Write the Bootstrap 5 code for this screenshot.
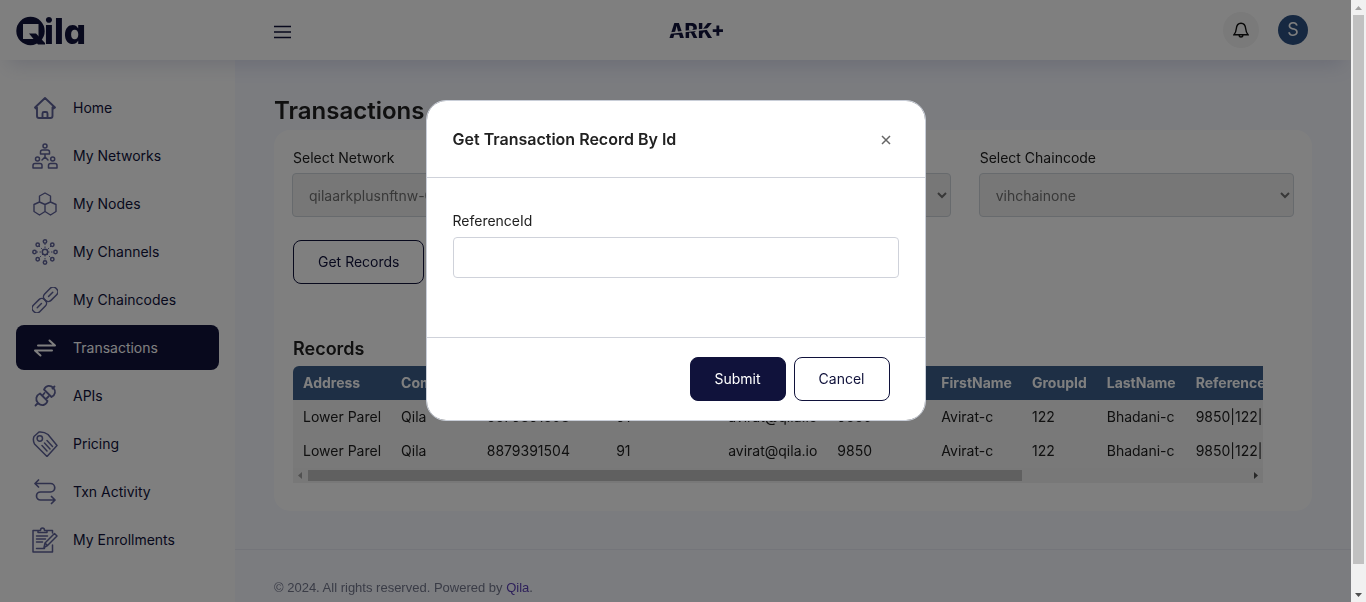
<!DOCTYPE html>
<html lang="en">
<head>
<meta charset="utf-8">
<meta name="viewport" content="width=device-width, initial-scale=1">
<title>Qila - Transactions</title>
<link href="https://cdn.jsdelivr.net/npm/bootstrap@5.3.0/dist/css/bootstrap.min.css" rel="stylesheet">
<style>
  :root { --navy: #10123b; --steel: #3c5f8a; --icon: #5f6299; --bar: 15px; }
  html { scrollbar-width: none; }
  body { font-family: Inter, "Liberation Sans", sans-serif; font-size: 14px; line-height: 20px; color: #212121; background: #f6f8ff; padding-right: var(--bar); }
  .topbar { height: 60px; right: var(--bar); background: #fff; box-shadow: 0 12px 20px -8px rgba(80, 90, 150, .2); }
  .brand-zone { width: 235px; padding-left: 16px; }
  .top-main { padding: 0 43px 0 39px; }
  .partner { margin-left: 36%; }
  .bell { width: 36px; height: 36px; background: #f4f4f4; }
  .avatar { width: 30px; height: 30px; background: #2c5082; color: #fff; font-size: 18px; }
  .sidebar { width: 235px; top: 60px; bottom: 0; background: #fff; padding: 25px 16px; gap: 3px; }
  .side-item { height: 45px; padding: 0 16px; gap: 15px; border-radius: 8px; color: var(--navy); text-decoration: none; }
  .side-item svg { width: 26px; height: 26px; fill: none; stroke: var(--icon); stroke-width: 1.5; stroke-linecap: round; stroke-linejoin: round; }
  .side-item.active { background: var(--navy); color: #fff; }
  .side-item.active svg { stroke: #fff; }
  .content-zone { margin-left: 235px; padding-top: 95px; }
  .page-body { padding: 0 39px; }
  .page-title { font-size: 24px; line-height: 32px; font-weight: 600; margin: 0 0 3px; color: #212121; }
  .panel { background: #fff; border-radius: 16px; padding: 18px 19px 28px; }
  .filters { display: grid; grid-template-columns: repeat(3, 1fr); gap: 28px; margin: 0 -1px 23px; }
  .filters label { display: block; margin-bottom: 5px; padding-left: 1px; }
  .filters select { width: 100%; height: 44px; padding: 0 12px; background: #efefef; border: 1px solid #ced4da; border-radius: 4px; color: #707070; opacity: 1; }
  .btn-q { height: 44px; padding: 0 24px; border-radius: 8px; font-size: 14px; line-height: 20px; --bs-btn-color: #10123b; --bs-btn-border-color: #10123b; --bs-btn-hover-bg: #10123b; --bs-btn-hover-color: #fff; }
  .btn-q-fill { --bs-btn-color: #fff; --bs-btn-bg: #10123b; }
  .records-title { font-size: 18px; line-height: 24px; font-weight: 600; margin: 53px 0 5px; }
  .records-wrap { margin-right: 30px; }
  .records-box { overflow-x: auto; scrollbar-width: none; background: #f2f2f2; border-radius: 6px 0 0 0; }
  .records { min-width: 100%; white-space: nowrap; }
  .records th, .records td { height: 34px; padding: 7px 10px; }
  .records th { background: var(--steel); color: #fff; font-weight: 700; }
  .records .col-employee { min-width: 104px; }
  .scroll-track { background: #f1f1f1; }
  .scroll-thumb { background: #c1c1c1; }
  .scroll-x { height: 15px; }
  .scroll-x .scroll-thumb { width: 76%; height: 11px; }
  .scroll-y { width: var(--bar); z-index: 1100; }
  .scroll-y .scroll-thumb { height: 96%; width: 11px; }
  .scroll-y svg, .scroll-x svg { display: block; flex: none; }
  .site-foot { margin-top: 38px; border-top: 1px solid #e9ebf4; padding: 28px 39px; font: 13px/20px "Liberation Sans", Arial, sans-serif; color: #74788d; }
  .site-foot a { color: #5b3fb5; text-decoration: none; }
  .modal-backdrop { width: 100%; height: 100%; }
  .modal { padding-right: var(--bar); scrollbar-width: none; }
  .modal-dialog { margin: 100px auto; }
  .modal-content { border: 1px solid #c9ced8; border-radius: 20px; overflow: hidden; }
  .modal-header { height: 77px; padding: 0 26px; border-color: #cfd2da; }
  .modal-title { font-size: 16px; line-height: 24px; font-weight: 600; }
  .close-x { border: 0; background: none; padding: 2px 5px 0; }
  .modal-body { padding: 33px 26px 59px; }
  .modal-body label { margin-bottom: 6px; }
  .modal-body input { height: 41px; border-color: #cfd2da; border-radius: 4px; }
  .modal-footer { padding: 19px 35px; gap: 8px; border-color: #cfd2da; }
  .modal-footer > * { margin: 0; }
</style>
</head>
<body>
<header class="topbar d-flex align-items-center fixed-top">
  <div class="brand-zone">
    <a href="#" aria-label="Qila home" class="d-block">
      <svg width="100" height="48" viewBox="0 0 100 48" class="d-block">
        <circle cx="14.500" cy="25" r="14.200" fill="#10123b"/>
        <path d="M7 18h15.500v15H7z" fill="#fff"/>
        <path d="M13 27.500h7l9 9.500v1.500h-7z" fill="#10123b"/>
        <text x="28" y="38" font-family="Inter, sans-serif" font-size="35" font-weight="800" fill="#10123b" style="font-feature-settings:'cv11'">ila</text>
      </svg>
    </a>
  </div>
  <div class="top-main flex-grow-1 d-flex align-items-center">
    <button type="button" class="border-0 bg-transparent p-0" aria-label="Toggle menu">
      <svg width="18" height="16" viewBox="0 0 18 16" class="d-block mt-1"><path d="M0 2.500h17M0 8h17M0 13.500h17" stroke="#10123b" stroke-width="1.700"/></svg>
    </button>
    <svg width="74" height="26" viewBox="0 0 74 26" class="partner me-auto">
      <text x="5" y="21" font-family="Inter, sans-serif" font-size="20" font-weight="800" fill="#10123b">ARK+</text>
      <path d="M2 16.500L44 12" stroke="#fff" stroke-width="1.500"/>
    </svg>
    <div class="d-flex align-items-center" style="gap:19px">
      <button type="button" class="bell rounded-circle border-0 p-0 d-flex align-items-center justify-content-center" aria-label="Notifications">
        <svg width="16" height="16" viewBox="0 0 16 16" fill="none" stroke="#111" stroke-width="1.400"><path d="M1 12.800h14c-1.500-1.600-2-3-2.300-6C12.400 3.300 10.500 1.200 8 1.200S3.600 3.300 3.300 6.800C3 9.800 2.500 11.200 1 12.800zM6 13.500c.5 2 3.500 2 4 0"/></svg>
      </button>
      <a href="#" class="avatar rounded-circle d-flex align-items-center justify-content-center text-decoration-none">S</a>
    </div>
  </div>
</header>

<nav class="sidebar position-fixed d-flex flex-column" aria-label="Main">
  <a href="#" class="side-item d-flex align-items-center"><svg viewBox="0 0 26 26" style="stroke-width:1.900"><path d="M3 12.500L13 3l10 9.500-1.500 1-1-1V21q0 2-2 2H7q-2 0-2-2v-8.500l-1 1zM10.500 23v-4.500q0-1.500 1.500-1.500h2q1.500 0 1.500 1.500V23"/></svg>Home</a>
  <a href="#" class="side-item d-flex align-items-center"><svg viewBox="0 0 26 26"><circle cx="13" cy="3" r="2"/><path d="M8.500 11V9q0-2 2-2h5q2 0 2 2v2zM13 11v3M13 14l-3 3M13 14l3 3M1 25v-2.500q0-2 2-2h5q2 0 2 2V25zM16.500 25v-2.500q0-2 2-2h4.500q2 0 2 2V25z"/><circle cx="5.500" cy="16" r="2"/><circle cx="20.700" cy="16" r="2"/></svg>My Networks</a>
  <a href="#" class="side-item d-flex align-items-center"><svg viewBox="0 0 26 26" style="stroke-width:1.400"><path d="M13 2l5.500 3v6L13 13.500l-5.500-2.500V5zM7.500 11l5.500 2.500v7l-5.500 3.500L2 20.500v-7zM18.500 11l5.500 2.500v7l-5.500 3.500-5.500-3.500v-7z"/></svg>My Nodes</a>
  <a href="#" class="side-item d-flex align-items-center"><svg viewBox="0 0 26 26"><circle cx="13" cy="13" r="2.700"/><circle cx="13" cy="2.500" r="1.700"/><circle cx="13" cy="23.500" r="1.700"/><circle cx="2.500" cy="13" r="1.700"/><circle cx="23.500" cy="13" r="1.700"/><circle cx="5.700" cy="5.700" r="1.700"/><circle cx="20.300" cy="5.700" r="1.700"/><circle cx="5.700" cy="20.300" r="1.700"/><circle cx="20.300" cy="20.300" r="1.700"/><path stroke-width="1" stroke-dasharray="1.500 1.500" stroke-linecap="butt" d="M13 4.500v5.500M13 16v5.500M4.500 13H10M16 13h5.500M7 7l4 4M15 15l4 4M19 7l-4 4M11 15l-4 4"/></svg>My Channels</a>
  <a href="#" class="side-item d-flex align-items-center"><svg viewBox="0 0 26 26"><g transform="rotate(-45 13 13)"><rect x="-3" y="8.500" width="16" height="9" rx="4"/><rect x="13" y="8.500" width="16" height="9" rx="4"/><path d="M2 13h6M18 13h6"/></g></svg>My Chaincodes</a>
  <a href="#" class="side-item active d-flex align-items-center" aria-current="page"><svg viewBox="0 0 26 26" style="stroke-width:2"><path d="M6 10.500h17l-5.500-5M20 15.500H3l5.500 5"/></svg>Transactions</a>
  <a href="#" class="side-item d-flex align-items-center"><svg viewBox="0 0 26 26" style="stroke-width:1.800"><path d="M3.500 22.500L6 20M20.500 5.500L22.500 3.500M8 10.500l7.500 7.500c-1.500 4.500-6 5.500-9.500 2-3-3.500-2-7.500 2-9.500zM12 6.500l7.500 7.500c4-2 4.500-6 2-9-3-3-7.500-3-9.500 1.500zM10.500 12.500l2-2.500M14 16l2.500-2.500"/></svg>APIs</a>
  <a href="#" class="side-item d-flex align-items-center"><svg viewBox="0 0 26 26"><path d="M2 5.500L7 1q5-.5 9 2.500l9 11L15 25.500 2.500 13Q.5 9 2 5.500zM10 14.500l5 5.500M12.500 12l5.500 6M15 9.500l5.500 6"/><circle cx="7.800" cy="7.500" r="2.700"/></svg>Pricing</a>
  <a href="#" class="side-item d-flex align-items-center"><svg viewBox="0 0 26 26" style="stroke-width:1.700"><path d="M6.500 1L3 4.500 6.500 8M3 4.500h15.500a4.200 4.200 0 0 1 0 8.500H8.500a4 4 0 0 0 0 8H23M19.500 17.500L23 21l-3.500 3.500"/></svg>Txn Activity</a>
  <a href="#" class="side-item d-flex align-items-center"><svg viewBox="0 0 26 26"><path d="M7 3.500H1V25h19.500v-7M14 3.500h6.500V6M6 5.500v-2h2.500q0-2.500 2-2.500t2 2.500H15v2zM4.500 9h11M4.500 12h9M4.500 15h6M4.500 21.500h8M12 20.500l1-4.500L22.500 6.500l2.500 2.500-9.500 9.500zM13 16l2.500 2.500"/></svg>My Enrollments</a>
</nav>

<div class="content-zone">
  <main class="page-body">
    <h1 class="page-title">Transactions</h1>
    <section class="panel">
      <div class="filters">
        <div><label for="network">Select Network</label><select id="network" disabled><option>qilaarkplusnftnw-01</option></select></div>
        <div><label for="channel">Select Channel</label><select id="channel" disabled><option>qilachannel</option></select></div>
        <div><label for="chaincode">Select Chaincode</label><select id="chaincode" disabled><option>vihchainone</option></select></div>
      </div>
      <button type="button" class="btn btn-q">Get Records</button>
      <h2 class="records-title">Records</h2>
      <div class="records-wrap">
        <div class="records-box">
          <table class="records">
            <thead><tr><th>Address</th><th>Company</th><th>ContactNumber</th><th>CountryCode</th><th>Email</th><th class="col-employee">EmployeeId</th><th>FirstName</th><th>GroupId</th><th>LastName</th><th>ReferenceId</th><th>TransactionType</th></tr></thead>
            <tbody>
              <tr><td>Lower Parel</td><td>Qila</td><td>8879391503</td><td>91</td><td>avirat@qila.io</td><td>9850</td><td>Avirat-c</td><td>122</td><td>Bhadani-c</td><td>9850|122|8879391503|Avirat-c</td><td>Create record</td></tr>
              <tr><td>Lower Parel</td><td>Qila</td><td>8879391504</td><td>91</td><td>avirat@qila.io</td><td>9850</td><td>Avirat-c</td><td>122</td><td>Bhadani-c</td><td>9850|122|8879391504|Avirat-c</td><td>Create record</td></tr>
            </tbody>
          </table>
        </div>
        <div class="scroll-track scroll-x d-flex align-items-center" aria-hidden="true">
          <svg width="15" height="15"><path d="M9 4v7L5 7.500z" fill="#a3a3a3"/></svg>
          <div class="flex-grow-1"><div class="scroll-thumb"></div></div>
          <svg width="15" height="15"><path d="M6 4v7l4-3.500z" fill="#505050"/></svg>
        </div>
      </div>
    </section>
  </main>
  <footer class="site-foot">© 2024. All rights reserved. Powered by <a href="#">Qila</a>.</footer>
</div>

<div class="modal-backdrop show"></div>
<div class="modal show d-block" role="dialog" aria-modal="true" aria-labelledby="recordTitle">
  <div class="modal-dialog">
    <form class="modal-content">
      <div class="modal-header">
        <h2 class="modal-title" id="recordTitle">Get Transaction Record By Id</h2>
        <button type="button" class="close-x" aria-label="Close"><svg width="16" height="16" viewBox="0 0 16 16" class="d-block"><path d="M4 4l8 8M12 4l-8 8" stroke="#666" stroke-width="1.500"/></svg></button>
      </div>
      <div class="modal-body">
        <label for="reference">ReferenceId</label>
        <input type="text" class="form-control" id="reference">
      </div>
      <div class="modal-footer">
        <button type="submit" class="btn btn-q btn-q-fill">Submit</button>
        <button type="button" class="btn btn-q">Cancel</button>
      </div>
    </form>
  </div>
</div>

<div class="scroll-track scroll-y position-fixed top-0 bottom-0 end-0 d-flex flex-column align-items-center" aria-hidden="true">
  <svg width="15" height="15"><path d="M4 10h7L7.500 6z" fill="#a3a3a3"/></svg>
  <div class="flex-grow-1"><div class="scroll-thumb"></div></div>
  <svg width="15" height="15"><path d="M4 6h7l-3.500 4z" fill="#505050"/></svg>
</div>
<script src="https://cdn.jsdelivr.net/npm/bootstrap@5.3.0/dist/js/bootstrap.bundle.min.js"></script>
</body>
</html>
